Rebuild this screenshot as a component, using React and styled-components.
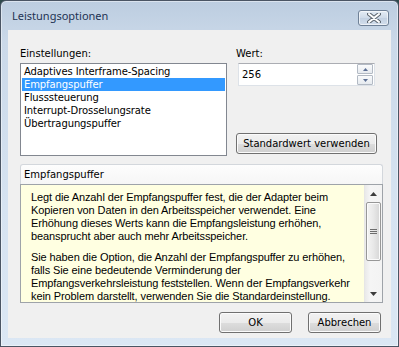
import React from 'react';
import styled, { createGlobalStyle } from 'styled-components';

const GlobalStyle = createGlobalStyle`
  html, body {
    margin: 0;
    padding: 0;
    background: #2e4a4c;
  }
`;

const Window = styled.div`
  box-sizing: border-box;
  width: 399px;
  height: 347px;
  display: flex;
  flex-direction: column;
  padding: 0 7px 8px 7px;
  border: 1px solid #4a5564;
  border-radius: 6px 6px 0 0;
  background: linear-gradient(#bccde0 0%, #cbd9e9 12%, #d6e3f1 60%, #dbe7f4 100%);
  box-shadow: inset 0 0 0 1px rgba(255, 255, 255, 0.45);
`;

const TitleBar = styled.div`
  height: 29px;
  flex: none;
  display: flex;
  align-items: flex-start;
  justify-content: space-between;
  padding: 9px 2px 0 4px;
  box-sizing: border-box;
`;

const Title = styled.span`
  font-family: 'Noto Sans', 'Open Sans', sans-serif;
  font-size: 11px;
  line-height: 16px;
  color: #1e3353;
  margin-top: -2px;
`;

const CloseButton = styled.div`
  width: 31px;
  height: 16px;
  box-sizing: border-box;
  border: 1px solid #6f8197;
  border-radius: 3px;
  background: linear-gradient(#e4ecf5, #cfdbe9 50%, #c3d1e2 51%, #d2deec);
  box-shadow: inset 0 0 0 1px rgba(255, 255, 255, 0.6);
  display: flex;
  align-items: center;
  justify-content: center;
`;

const Client = styled.div`
  flex: 1;
  display: flex;
  flex-direction: column;
  background: #f0f0f0;
  padding: 17px 8px 0 12px;
  font-family: 'DejaVu Sans', Tahoma, sans-serif;
  font-size: 10px;
  color: #000;
`;

const TopRow = styled.div`
  display: flex;
  gap: 9px;
`;

const Column = styled.div`
  display: flex;
  flex-direction: column;
  width: ${p => p.$width}px;
  height: 109px;
`;

const Label = styled.div`
  height: 13px;
  line-height: 13px;
  margin-bottom: 3px;
  white-space: nowrap;
`;

const ListBox = styled.div`
  box-sizing: border-box;
  height: 93px;
  background: #fff;
  border: 1px solid #828790;
  padding: 1px;
`;

const ListItem = styled.div`
  height: 13px;
  line-height: 13px;
  padding-left: 2px;
  white-space: nowrap;
  letter-spacing: -0.1px;
  background: ${p => (p.$selected ? '#3399ff' : 'transparent')};
  color: ${p => (p.$selected ? '#fff' : '#000')};
`;

const SpinBox = styled.div`
  box-sizing: border-box;
  margin-left: 2px;
  width: 137px;
  height: 23px;
  display: flex;
  align-items: center;
  justify-content: space-between;
  background: #fff;
  border: 1px solid #dde2e8;
  border-top-color: #abadb3;
  padding: 0 1px 0 3px;
`;

const SpinButtons = styled.div`
  display: flex;
  flex-direction: column;
  gap: 1px;
`;

const SpinButton = styled.div`
  box-sizing: border-box;
  width: 16px;
  height: 10px;
  border: 1px solid #b3bac4;
  border-radius: 1px;
  background: linear-gradient(#fafbfc, #e6eaef);
  display: flex;
  align-items: center;
  justify-content: center;
`;

const PushButton = styled.div`
  box-sizing: border-box;
  width: ${p => p.$width}px;
  height: 21px;
  border: 1px solid #707070;
  border-radius: 3px;
  background: linear-gradient(#f2f2f2 0%, #ebebeb 50%, #dddddd 51%, #cfcfcf 100%);
  box-shadow: inset 0 0 0 1px #fbfbfb;
  display: flex;
  align-items: center;
  justify-content: center;
  white-space: nowrap;
  line-height: 13px;
`;

const DefaultButton = styled(PushButton)`
  margin-top: auto;
  margin-bottom: 2px;
`;

const InfoBox = styled.div`
  margin-top: 8px;
  width: 363px;
  height: 139px;
  display: flex;
  flex-direction: column;
`;

const InfoHeader = styled.div`
  box-sizing: border-box;
  height: 20px;
  flex: none;
  border: 1px solid #d3d7dc;
  border-bottom: none;
  border-radius: 3px 3px 0 0;
  background: linear-gradient(#fdfdfd, #f6f6f6);
  padding-left: 3px;
  line-height: 19px;
`;

const InfoBody = styled.div`
  flex: 1;
  min-height: 0;
  display: flex;
  border: 1px solid #9ea3a9;
  background: #ffffe1;
  overflow: hidden;
`;

const InfoText = styled.div`
  flex: 1;
  padding: 6px 0 0 10px;
  font-family: 'Liberation Sans', Arial, sans-serif;
  font-size: 11px;
  line-height: 13px;
  letter-spacing: -0.1px;
  white-space: nowrap;
`;

const Paragraph = styled.p`
  margin: 0 0 8px;
`;

const ScrollBar = styled.div`
  width: 17px;
  flex: none;
  display: flex;
  flex-direction: column;
  align-items: center;
  background: linear-gradient(90deg, #e9e9e9, #f5f5f5 30%, #f3f3f3);
  border-left: 1px solid #e6e6e6;
`;

const ScrollArrow = styled.div`
  height: 17px;
  display: flex;
  align-items: center;
  justify-content: center;
`;

const ScrollThumb = styled.div`
  box-sizing: border-box;
  width: 15px;
  height: 59px;
  border: 1px solid #979797;
  border-radius: 2px;
  background: linear-gradient(90deg, #f4f4f4, #e8e8e8 50%, #d6d6d6);
  box-shadow: inset 0 0 0 1px #fbfbfb;
  display: flex;
  align-items: center;
  justify-content: center;
  margin-bottom: auto;
`;

const ButtonRow = styled.div`
  display: flex;
  justify-content: flex-end;
  gap: 16px;
  margin-top: 9px;
  padding-right: 2px;
`;

const Arrow = ({ up, color = '#4c5f80', w = 7, h = 4 }) => (
  <svg width={w} height={h} viewBox="0 0 7 4">
    <path d={up ? 'M0 4 L3.5 0 L7 4 Z' : 'M0 0 L3.5 4 L7 0 Z'} fill={color} />
  </svg>
);

const CloseGlyph = () => (
  <svg width="14" height="10" viewBox="0 0 14 10">
    <path d="M2 1 L12 9 M12 1 L2 9" stroke="#5d6670" strokeWidth="4" strokeLinecap="round" />
    <path d="M2 1 L12 9 M12 1 L2 9" stroke="#ffffff" strokeWidth="2" strokeLinecap="round" />
  </svg>
);

const Grip = () => (
  <svg width="7" height="7" viewBox="0 0 7 7">
    <path d="M0 1.5 H7 M0 3.5 H7 M0 5.5 H7" stroke="#6d6d6d" strokeWidth="1" />
  </svg>
);

const settings = [
  'Adaptives Interframe-Spacing',
  'Empfangspuffer',
  'Flusssteuerung',
  'Interrupt-Drosselungsrate',
  'Übertragungspuffer',
];

const App = () => (
  <>
    <GlobalStyle />
    <Window>
      <TitleBar>
        <Title>Leistungsoptionen</Title>
        <CloseButton>
          <CloseGlyph />
        </CloseButton>
      </TitleBar>

      <Client>
        <TopRow>
          <Column $width={207}>
            <Label>Einstellungen:</Label>
            <ListBox>
              {settings.map(item => (
                <ListItem key={item} $selected={item === 'Empfangspuffer'}>
                  {item}
                </ListItem>
              ))}
            </ListBox>
          </Column>

          <Column $width={141}>
            <Label>Wert:</Label>
            <SpinBox>
              <span>256</span>
              <SpinButtons>
                <SpinButton>
                  <Arrow up w={5} h={3} color="#5c6f94" />
                </SpinButton>
                <SpinButton>
                  <Arrow w={5} h={3} color="#5c6f94" />
                </SpinButton>
              </SpinButtons>
            </SpinBox>
            <DefaultButton $width={141}>Standardwert verwenden</DefaultButton>
          </Column>
        </TopRow>

        <InfoBox>
          <InfoHeader>Empfangspuffer</InfoHeader>
          <InfoBody>
            <InfoText>
              <Paragraph>
                Legt die Anzahl der Empfangspuffer fest, die der Adapter beim
                <br />
                Kopieren von Daten in den Arbeitsspeicher verwendet. Eine
                <br />
                Erhöhung dieses Werts kann die Empfangsleistung erhöhen,
                <br />
                beansprucht aber auch mehr Arbeitsspeicher.
              </Paragraph>
              <Paragraph>
                Sie haben die Option, die Anzahl der Empfangspuffer zu erhöhen,
                <br />
                falls Sie eine bedeutende Verminderung der
                <br />
                Empfangsverkehrsleistung feststellen. Wenn der Empfangsverkehr
                <br />
                kein Problem darstellt, verwenden Sie die Standardeinstellung.
              </Paragraph>
            </InfoText>
            <ScrollBar>
              <ScrollArrow>
                <Arrow up color="#3c3c3c" />
              </ScrollArrow>
              <ScrollThumb>
                <Grip />
              </ScrollThumb>
              <ScrollArrow>
                <Arrow color="#3c3c3c" />
              </ScrollArrow>
            </ScrollBar>
          </InfoBody>
        </InfoBox>

        <ButtonRow>
          <PushButton $width={73}>OK</PushButton>
          <PushButton $width={73}>Abbrechen</PushButton>
        </ButtonRow>
      </Client>
    </Window>
  </>
);

export default App;
